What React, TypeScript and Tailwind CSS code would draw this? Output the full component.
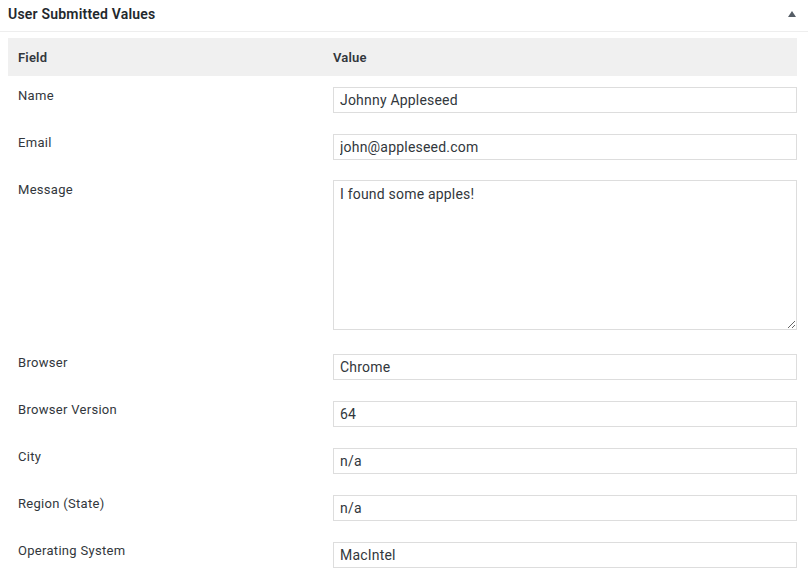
import React from 'react';

const rows: { label: string; value: string; multiline?: boolean }[] = [
  { label: 'Name', value: 'Johnny Appleseed' },
  { label: 'Email', value: 'john@appleseed.com' },
  { label: 'Message', value: 'I found some apples!', multiline: true },
  { label: 'Browser', value: 'Chrome' },
  { label: 'Browser Version', value: '64' },
  { label: 'City', value: 'n/a' },
  { label: 'Region (State)', value: 'n/a' },
  { label: 'Operating System', value: 'MacIntel' },
];

export default function App() {
  return (
    <div className="w-[808px] h-[584px] bg-white overflow-hidden text-[#23282d]" style={{ fontFamily: 'Roboto, "Open Sans", sans-serif' }}>
      <div className="h-[32px] flex items-center justify-between pl-[8px] pr-[12px] pb-[3px] border-b border-[#eeeeee]">
        <h2 className="text-[14px] font-semibold text-[#23282d] leading-none tracking-[0.2px]">User Submitted Values</h2>
        <span className="w-0 h-0 border-l-[4px] border-r-[4px] border-b-[6px] border-l-transparent border-r-transparent border-b-[#555d66]" />
      </div>

      <div className="ml-[8px] mt-[6px] w-[789px]">
        <div className="flex h-[38px] items-center pt-[1px] bg-[#f0f0f0] text-[13px] font-semibold text-[#32373c] tracking-[0.2px]">
          <div className="w-[315px] pl-[10px]">Field</div>
          <div className="flex-1 pl-[10px]">Value</div>
        </div>

        {rows.map(r => (
          <div key={r.label} className="flex pt-[11px] pb-[10px]">
            <div className="w-[315px] pl-[10px] text-[13px] text-[#32373c] leading-[18px] tracking-[0.3px]">{r.label}</div>
            <div className="flex-1 pl-[10px]">
              {r.multiline ? (
                <textarea
                  readOnly
                  value={r.value}
                  className="block w-full h-[150px] -mt-[1px] mb-[3px] border border-[#dddddd] px-[6px] pt-[3px] pb-[4px] text-[14px] text-[#32373c] leading-[20px] tracking-[0.2px] resize-y outline-none"
                />
              ) : (
                <input
                  readOnly
                  value={r.value}
                  className="block w-full h-[26px] border border-[#dddddd] px-[6px] text-[14px] text-[#32373c] tracking-[0.2px] outline-none"
                />
              )}
            </div>
          </div>
        ))}
      </div>
    </div>
  );
}
